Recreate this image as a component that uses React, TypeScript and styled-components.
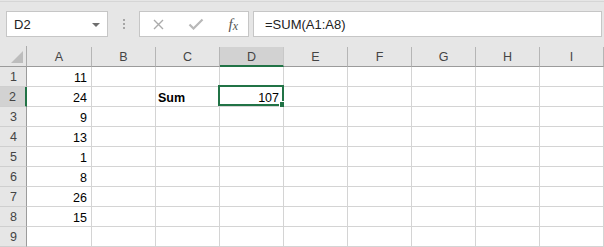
import React from "react";
import styled, { createGlobalStyle } from "styled-components";

const GREEN = "#217346";

const GlobalStyle = createGlobalStyle`
  html, body {
    margin: 0;
    padding: 0;
    background: #e6e6e6;
    font-family: "Liberation Sans", Arial, sans-serif;
  }
`;

const columns = ["A", "B", "C", "D", "E", "F", "G", "H", "I"];
const values = [11, 24, 9, 13, 1, 8, 26, 15, null];

const App: React.FC = () => {
  return (
    <Page>
      <GlobalStyle />
      <FormulaBar>
        <NameBox>
          <span>D2</span>
          <DropArrow />
        </NameBox>
        <Grip>
          <i />
          <i />
          <i />
        </Grip>
        <ButtonBox>
          <svg width="11" height="11" viewBox="0 0 11 11">
            <path d="M1 1 L10 10 M10 1 L1 10" stroke="#ababab" strokeWidth="1.4" fill="none" />
          </svg>
          <svg width="16" height="12" viewBox="0 0 16 12">
            <path d="M1.5 6.5 L5.5 10.5 L14.5 1.5" stroke="#b8b8b8" strokeWidth="2.2" fill="none" />
          </svg>
          <Fx>
            f<sub>x</sub>
          </Fx>
        </ButtonBox>
        <FormulaInput>=SUM(A1:A8)</FormulaInput>
      </FormulaBar>
      <Sheet>
        <Corner>
          <Triangle />
        </Corner>
        {columns.map((c) => (
          <ColHeader key={c} $selected={c === "D"}>
            {c}
          </ColHeader>
        ))}
        {values.map((v, i) => {
          const row = i + 1;
          return (
            <React.Fragment key={row}>
              <RowHeader $selected={row === 2}>{row}</RowHeader>
              {columns.map((c) => {
                let content: React.ReactNode = null;
                if (c === "A" && v !== null) content = v;
                if (c === "C" && row === 2) content = <b>Sum</b>;
                if (c === "D" && row === 2) content = 107;
                const active = c === "D" && row === 2;
                return (
                  <Cell key={c} $align={c === "C" ? "left" : "right"}>
                    {content}
                    {active && (
                      <Selection>
                        <FillHandle />
                      </Selection>
                    )}
                  </Cell>
                );
              })}
            </React.Fragment>
          );
        })}
      </Sheet>
    </Page>
  );
};

export default App;

const Page = styled.div`
  width: 604px;
  height: 247px;
  overflow: hidden;
  background: #e6e6e6;
  display: flex;
  flex-direction: column;
`;

const FormulaBar = styled.div`
  height: 45px;
  margin-top: 1px;
  border-top: 1px solid #d6d6d6;
  box-sizing: border-box;
  display: flex;
  align-items: flex-start;
  padding: 9px 2px 0 6px;
`;

const Box = styled.div`
  height: 26px;
  box-sizing: border-box;
  background: #fff;
  border: 1px solid #c6c6c6;
  display: flex;
  align-items: center;
`;

const NameBox = styled(Box)`
  width: 102px;
  padding: 0 7px 0 7px;
  justify-content: space-between;
  font-size: 13px;
  color: #222;
`;

const DropArrow = styled.div`
  width: 0;
  height: 0;
  border-left: 4px solid transparent;
  border-right: 4px solid transparent;
  border-top: 4px solid #6e6e6e;
  margin-top: 1px;
`;

const Grip = styled.div`
  width: 31px;
  height: 26px;
  display: flex;
  flex-direction: column;
  align-items: center;
  justify-content: center;
  gap: 2px;

  i {
    display: block;
    width: 2px;
    height: 2px;
    background: #a6a6a6;
  }
`;

const ButtonBox = styled(Box)`
  width: 110px;
  padding: 0 10px 0 13px;
  justify-content: space-between;
`;

const Fx = styled.span`
  font-family: "Liberation Serif", "Times New Roman", serif;
  font-style: italic;
  font-size: 15px;
  color: #555;
  line-height: 1;

  sub {
    font-size: 12px;
    vertical-align: -1px;
  }
`;

const FormulaInput = styled(Box)`
  flex: 1;
  margin-left: 4px;
  padding-left: 11px;
  font-size: 13px;
  color: #222;
`;

const Sheet = styled.div`
  display: grid;
  grid-template-columns: 27px 65px repeat(7, 64px) 1fr;
  grid-template-rows: 21px repeat(9, 20px);
  font-size: 12.5px;
`;

const Corner = styled.div`
  position: relative;
  border-right: 1px solid #ababab;
  border-bottom: 1px solid #9b9b9b;
  display: flex;
  align-items: flex-end;
  justify-content: flex-end;
  padding: 0 3px 3px 0;
`;

const Triangle = styled.div`
  width: 0;
  height: 0;
  border-left: 12px solid transparent;
  border-bottom: 12px solid #bdbdbd;
`;

const ColHeader = styled.div<{ $selected?: boolean }>`
  display: flex;
  align-items: center;
  justify-content: center;
  color: #444;
  font-family: "Liberation Sans", Arial, sans-serif;
  font-size: 12.5px;
  padding-top: 1px;
  background: ${(p) => (p.$selected ? "#d2d2d2" : "transparent")};
  border-right: 1px solid ${(p) => (p.$selected ? "#c8c8c8" : "#b5b5b5")};
  border-bottom: ${(p) => (p.$selected ? `2px solid ${GREEN}` : "1px solid #9b9b9b")};
  margin-top: 1px;
  box-sizing: border-box;
`;

const RowHeader = styled.div<{ $selected?: boolean }>`
  display: flex;
  align-items: center;
  justify-content: center;
  color: #444;
  font-size: 12.5px;
  padding-top: 1px;
  box-sizing: border-box;
  background: ${(p) => (p.$selected ? "#d2d2d2" : "#e6e6e6")};
  border-bottom: 1px solid #cfcfcf;
  border-right: ${(p) => (p.$selected ? `2px solid ${GREEN}` : "1px solid #9b9b9b")};
  padding-left: ${(p) => (p.$selected ? "0" : "1px")};
`;

const Cell = styled.div<{ $align: "left" | "right" }>`
  position: relative;
  background: #fff;
  border-right: 1px solid #d4d4d4;
  border-bottom: 1px solid #d4d4d4;
  display: flex;
  align-items: flex-end;
  justify-content: ${(p) => (p.$align === "left" ? "flex-start" : "flex-end")};
  padding: 0 4px 2px 2px;
  color: #000;
  line-height: 1;

  b {
    font-weight: bold;
  }
`;

const Selection = styled.div`
  position: absolute;
  top: -2px;
  left: -2px;
  right: -1px;
  bottom: 0;
  border: 2px solid ${GREEN};
  pointer-events: none;
`;

const FillHandle = styled.div`
  position: absolute;
  right: -4px;
  bottom: -4px;
  width: 5px;
  height: 5px;
  background: ${GREEN};
  border: 1px solid #fff;
`;
